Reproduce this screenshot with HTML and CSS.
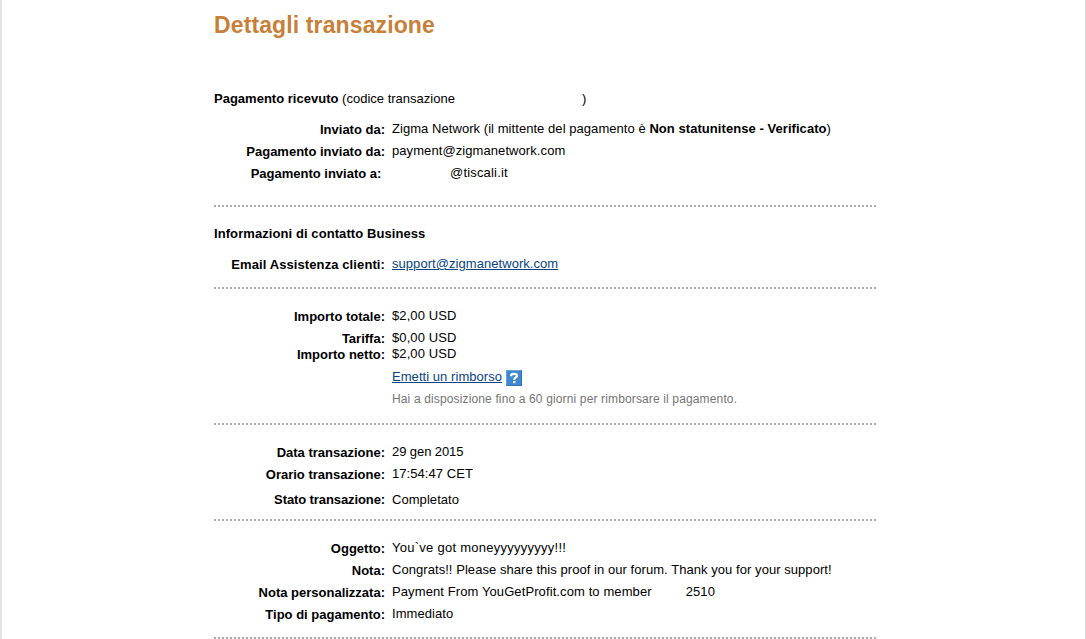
FILE: index.html
```html
<!DOCTYPE html>
<html lang="it">
<head>
  <meta charset="UTF-8" />
  <title>Dettagli transazione</title>
  <link rel="stylesheet" href="styles.css">
</head>
<body>
  <div class="page">
    <div class="content">
      <h1>Dettagli transazione</h1>

      <div class="section payment">
        <p class="intro"><strong>Pagamento ricevuto</strong> (codice transazione<span class="code-gap"></span>)</p>
        <div class="row"><div class="label">Inviato da:</div><div class="value">Zigma Network (il mittente del pagamento è <strong>Non statunitense - Verificato</strong>)</div></div>
        <div class="row"><div class="label">Pagamento inviato da:</div><div class="value email">payment@zigmanetwork.com</div></div>
        <div class="row"><div class="label">Pagamento inviato a:&nbsp;</div><div class="value"><span class="mail-gap"></span><span class="domain">@tiscali.it</span></div></div>
      </div>

      <div class="section contact">
        <h2>Informazioni di contatto Business</h2>
        <div class="row"><div class="label wide">Email Assistenza clienti:</div><div class="value"><a href="#">support@zigmanetwork.com</a></div></div>
      </div>

      <div class="section amount">
        <div class="row"><div class="label">Importo totale:</div><div class="value sum">$2,00 USD</div></div>
        <div class="row tight"><div class="label">Tariffa:</div><div class="value sum">$0,00 USD</div></div>
        <div class="row net"><div class="label">Importo netto:</div><div class="value sum">$2,00 USD</div></div>
        <div class="row">
          <div class="label"></div>
          <div class="value refund">
            <a href="#">Emetti un rimborso</a>
            <svg class="help" width="16" height="16" viewBox="0 0 16 16">
              <rect width="16" height="16" fill="#2f72b8"/>
              <rect width="15" height="15" fill="#62a5df"/>
              <rect x="1" y="1" width="14" height="14" fill="#3f88d0"/>
              <path d="M5.2 6.2V5.4C5.2 4.2 6.3 3.8 8.1 3.8s2.9.5 2.9 1.9c0 1.8-2.8 1.7-2.8 4.1" fill="none" stroke="#fff" stroke-width="2.3"/>
              <rect x="7" y="11" width="2.4" height="2.2" fill="#fff"/>
            </svg>
          </div>
        </div>
        <div class="row"><div class="label"></div><div class="value note">Hai a disposizione fino a 60 giorni per rimborsare il pagamento.</div></div>
      </div>

      <div class="section date">
        <div class="row"><div class="label">Data transazione:</div><div class="value day">29 gen 2015</div></div>
        <div class="row"><div class="label">Orario transazione:</div><div class="value">17:54:47 CET</div></div>
        <div class="row status"><div class="label">Stato transazione:</div><div class="value">Completato</div></div>
      </div>

      <div class="section message">
        <div class="row"><div class="label">Oggetto:</div><div class="value subject">You`ve got moneyyyyyyyyy!!!</div></div>
        <div class="row"><div class="label">Nota:</div><div class="value">Congrats!! Please share this proof in our forum. Thank you for your support!</div></div>
        <div class="row"><div class="label">Nota personalizzata:</div><div class="value custom">Payment From YouGetProfit.com to member<span class="member-gap"></span>2510</div></div>
        <div class="row"><div class="label">Tipo di pagamento:</div><div class="value">Immediato</div></div>
      </div>
    </div>
  </div>
</body>
</html>
```

FILE: styles.css
```css
* {
  box-sizing: border-box;
}
body {
  margin: 0;
  background: #fff;
  color: #000;
  font-family: "Liberation Sans", Arial, Helvetica, sans-serif;
  font-size: 13px;
  line-height: 16px;
}
.page {
  height: 639px;
  overflow: hidden;
  border-left: 2px solid #e5e5e5;
  border-right: 1px solid #d9d9d9;
}
.content {
  width: 662px;
  margin-left: 212px;
  white-space: nowrap;
}
h1 {
  margin: 0;
  padding-top: 10px;
  height: 91px;
  color: #c88039;
  font-size: 23px;
  line-height: 30px;
  letter-spacing: 0.12px;
}
h2 {
  margin: 0 0 14px;
  font-size: 13px;
  line-height: 16px;
  letter-spacing: 0.08px;
}
.intro {
  margin: 0 0 14px;
  letter-spacing: 0.01px;
}
.section {
  /* 2px dots, 2px gaps */
  background: repeating-linear-gradient(to right, #aaa 0, #aaa 2px, transparent 2px, transparent 4px) left bottom / 100% 2px no-repeat;
}
.payment {
  height: 116px;
}
.contact {
  height: 82px;
  padding-top: 19px;
}
.amount {
  height: 136px;
  padding-top: 19px;
}
.date {
  height: 96px;
  padding-top: 19px;
}
.message {
  height: 118px;
  padding-top: 19px;
}
.row {
  display: flex;
  height: 22px;
}
.row.tight {
  height: 16px;
}
.row.net {
  height: 23px;
}
.label {
  width: 171px;
  margin-right: 7px;
  padding-top: 1px;
  font-weight: bold;
  text-align: right;
}
.label.wide {
  letter-spacing: 0.1px;
}
.value {
  letter-spacing: 0.055px;
}
.status {
  padding-top: 4px;
}
.status .label {
  padding-top: 0;
  letter-spacing: -0.1px;
}
.email {
  letter-spacing: 0.08px;
}
.domain {
  letter-spacing: 0.18px;
}
.sum {
  letter-spacing: 0.1px;
}
.day {
  letter-spacing: -0.08px;
}
.subject {
  letter-spacing: 0.26px;
}
.custom {
  letter-spacing: 0.1px;
}
.code-gap {
  display: inline-block;
  width: 127px;
}
.mail-gap {
  display: inline-block;
  width: 58px;
}
.member-gap {
  display: inline-block;
  width: 34px;
}
a {
  color: #084482;
  text-decoration: underline;
}
.refund {
  display: flex;
  gap: 4px;
}
.help {
  margin-top: 1px;
}
.note {
  color: #757575;
  font-size: 12px;
  letter-spacing: 0.14px;
}
```
